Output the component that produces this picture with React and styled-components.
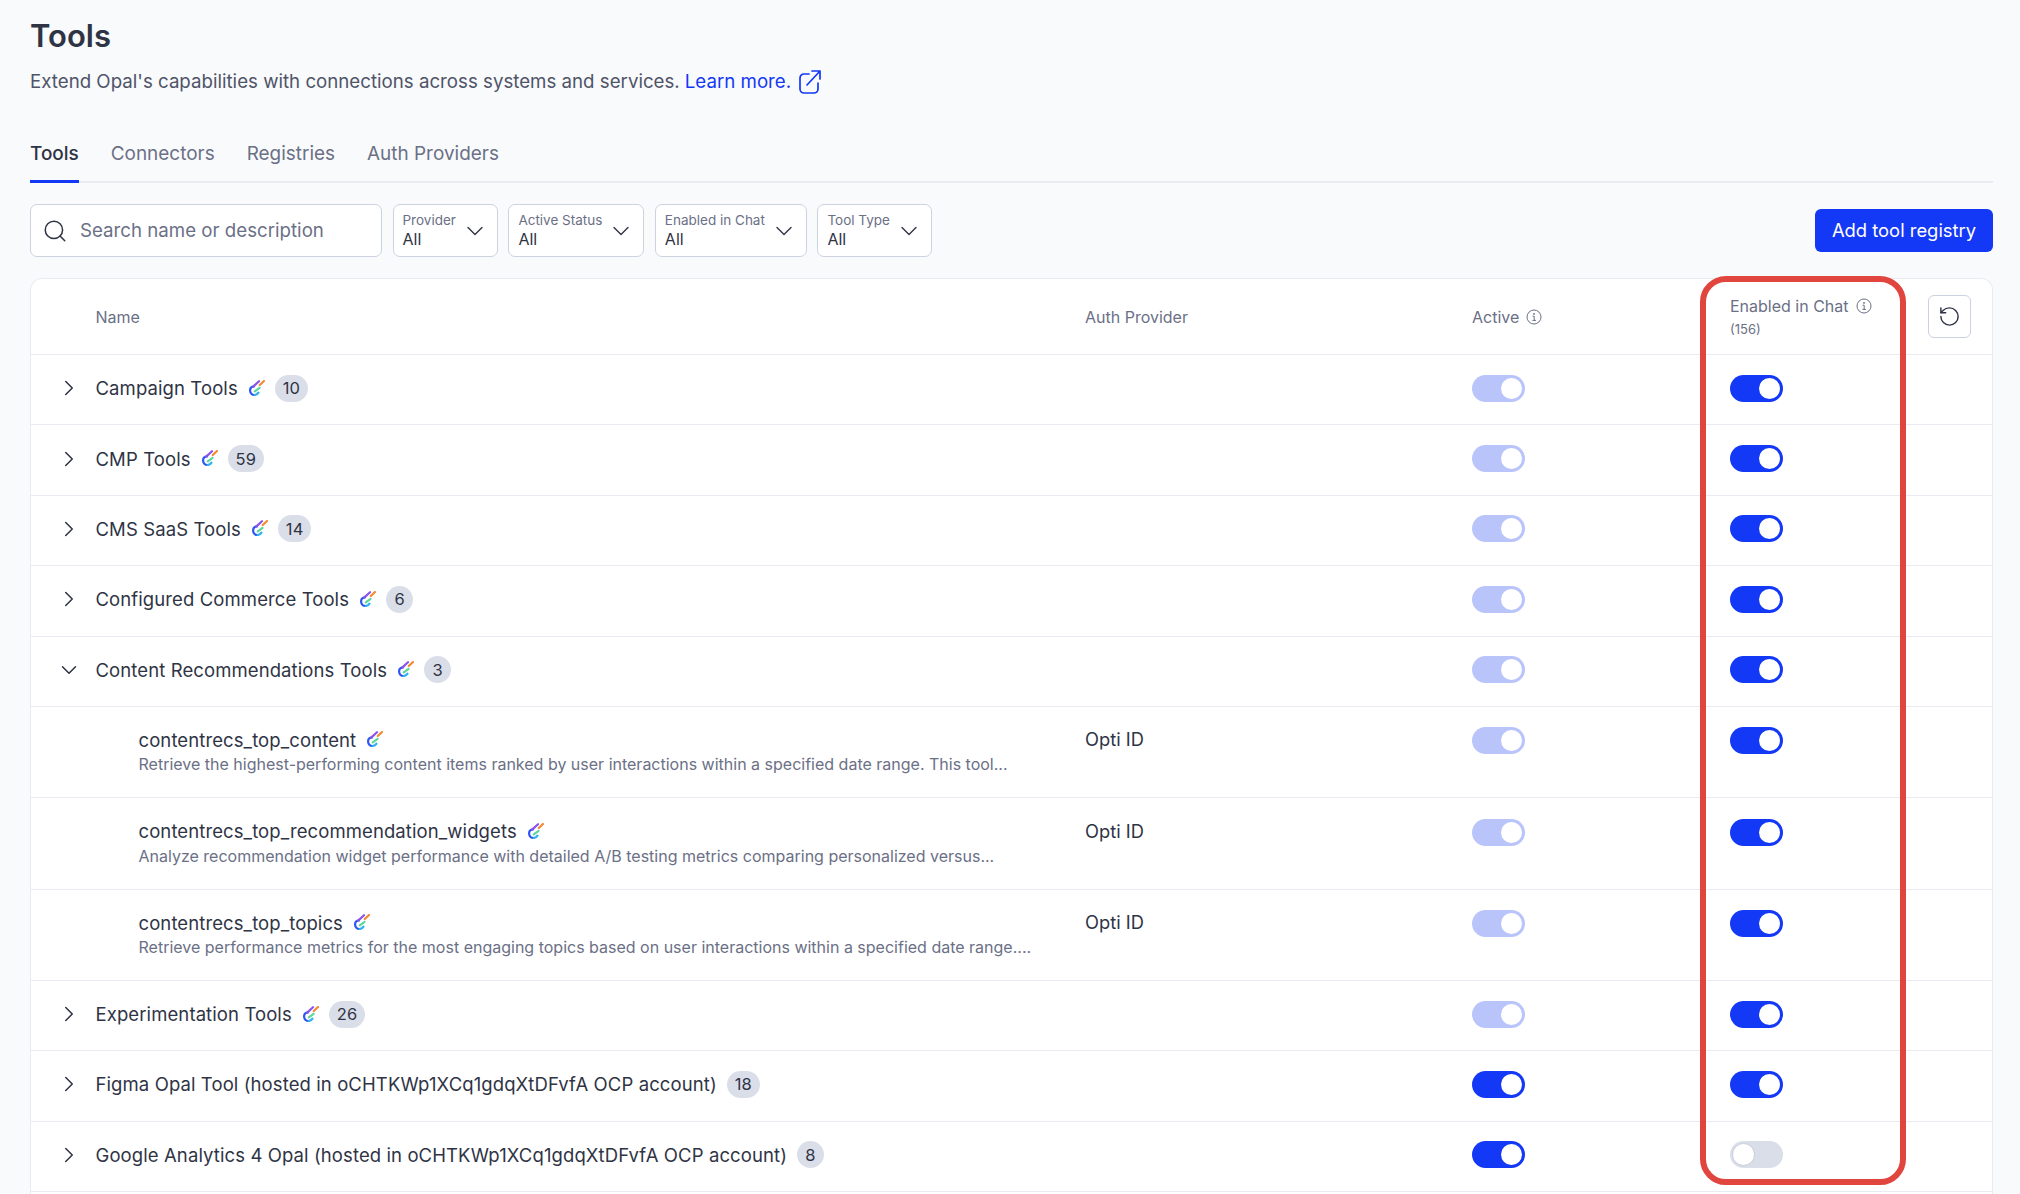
import { ChevronDown, ChevronRight, RotateCcw, Search } from "lucide-react";
import styled, { createGlobalStyle } from "styled-components";

const colors = {
  page: "#f9fafc",
  line: "#e9ebf3",
  field: "#cdd2e0",
  text: "#2f3445",
  muted: "#6b7086",
  blue: "#1338f6",
  blueSoft: "#b9c4fb",
  off: "#dadee8",
};

const GlobalStyle = createGlobalStyle`
  html, body {
    margin: 0;
    height: 100%;
    overflow: hidden;
    background: ${colors.page};
  }
  * { box-sizing: border-box; }
`;

const Page = styled.main`
  height: 1194px;
  padding: 16px 27px 0 30px;
  display: flex;
  flex-direction: column;
  overflow: hidden;
  font-family: Inter, "Noto Sans", sans-serif;
  color: ${colors.text};
`;

const Title = styled.h1`
  margin: 0;
  font-size: 31px;
  line-height: 40px;
  font-weight: 600;
`;

const Subtitle = styled.p`
  margin: 12px 0 0;
  display: flex;
  align-items: center;
  font-size: 18.7px;
  line-height: 28px;
  color: #4f5468;

  a {
    margin-left: 5px;
    color: ${colors.blue};
    text-decoration: none;
  }
  svg {
    margin-left: 8px;
    color: ${colors.blue};
  }
`;

const Tabs = styled.nav`
  margin-top: 45px;
  display: flex;
  gap: 32px;
  border-bottom: 2px solid ${colors.line};
`;

const Tab = styled.a`
  padding-bottom: 13px;
  margin-bottom: -2px;
  font-size: 18.95px;
  line-height: 26px;
  font-weight: ${(p) => (p.$active ? 500 : 400)};
  color: ${(p) => (p.$active ? colors.text : colors.muted)};
  border-bottom: 3px solid ${(p) => (p.$active ? colors.blue : "transparent")};
`;

const Toolbar = styled.div`
  margin-top: 21px;
  display: flex;
  align-items: center;
  gap: 10.5px;
`;

const SearchBox = styled.label`
  width: 352px;
  height: 53px;
  padding: 0 14px 0 11px;
  display: flex;
  align-items: center;
  gap: 12px;
  background: #fff;
  border: 1px solid ${colors.field};
  border-radius: 7px;
  color: ${colors.text};
`;

const SearchInput = styled.input`
  flex: 1;
  min-width: 0;
  border: 0;
  outline: 0;
  padding: 0;
  background: transparent;
  font-family: inherit;
  font-size: 18.7px;
  &::placeholder {
    color: ${colors.muted};
    opacity: 1;
  }
`;

const Filter = styled.button`
  height: 53px;
  padding: 0 8px 0 9px;
  display: flex;
  align-items: center;
  gap: 5px;
  background: #fff;
  border: 1px solid ${colors.field};
  border-radius: 7px;
  font-family: inherit;
  color: ${colors.text};
  text-align: left;
`;

const FilterText = styled.span`
  display: flex;
  flex-direction: column;
  margin-top: -2px;
`;

const FilterLabel = styled.span`
  font-size: 13.5px;
  line-height: 19px;
  color: ${colors.muted};
`;

const FilterValue = styled.span`
  font-size: 16px;
  line-height: 19px;
`;

const AddButton = styled.button`
  margin-left: auto;
  width: 178px;
  height: 43px;
  padding: 0 0 2px;
  border: 0;
  border-radius: 6px;
  background: ${colors.blue};
  color: #fff;
  font-family: inherit;
  font-size: 18.4px;
  font-weight: 400;
`;

const TableWrap = styled.div`
  position: relative;
  margin-top: 21px;
  flex: 1;
`;

const Card = styled.section`
  height: 100%;
  overflow: hidden;
  background: #fff;
  border: 1px solid ${colors.line};
  border-bottom: 0;
  border-radius: 12px 12px 0 0;
`;

const Row = styled.div`
  display: grid;
  grid-template-columns: 64.5px 989.5px 387px 258px 198px 1fr;
  align-items: ${(p) => (p.$child ? "start" : "center")};
  height: ${(p) => (p.$child ? "91.3px" : "70.4px")};
  padding: ${(p) => (p.$child ? "20.5px 0 0" : "0 0 3px")};
  border-bottom: 1px solid ${colors.line};
`;

const HeadRow = styled(Row)`
  height: 76px;
  padding: 0;
`;

const HeadCell = styled.div`
  font-size: 16px;
  line-height: 22px;
  color: ${colors.muted};
`;

const HeadLabel = styled.span`
  display: flex;
  align-items: center;
  gap: 7px;
`;

const HeadCount = styled.div`
  margin-top: 2px;
  font-size: 13px;
  line-height: 20px;
`;

const ResetButton = styled.button`
  width: 43px;
  height: 43px;
  display: flex;
  align-items: center;
  justify-content: center;
  padding: 0;
  background: #fff;
  border: 1px solid ${colors.field};
  border-radius: 6px;
  color: ${colors.text};
`;

const Expander = styled.span`
  display: flex;
  justify-content: center;
  padding-left: 11px;
  color: ${colors.text};
`;

const NameCell = styled.div`
  margin-top: ${(p) => (p.$child ? "-1px" : "0")};
  padding-left: ${(p) => (p.$child ? "43px" : "0")};
  min-width: 0;
`;

const NameLine = styled.div`
  display: flex;
  align-items: center;
  gap: 11px;
  height: 27px;
  font-size: 18.5px;
  letter-spacing: 0.1px;
`;

const Description = styled.div`
  font-size: 16px;
  line-height: 22px;
  color: ${colors.muted};
  white-space: nowrap;
`;

const Badge = styled.span`
  min-width: 27px;
  height: 27px;
  padding: 0 8px;
  margin-left: -1px;
  display: inline-flex;
  align-items: center;
  justify-content: center;
  border-radius: 14px;
  background: ${colors.off};
  font-size: 16.5px;
`;

const AuthCell = styled.div`
  margin-top: -1px;
  font-size: 18.3px;
  line-height: 27px;
`;

const Track = styled.span`
  width: 53px;
  height: 27px;
  padding: 3px;
  border-radius: 14px;
  display: flex;
  justify-content: ${(p) => (p.$on ? "flex-end" : "flex-start")};
  background: ${(p) => (p.$on ? (p.$soft ? colors.blueSoft : colors.blue) : colors.off)};
`;

const Knob = styled.span`
  width: 21px;
  height: 21px;
  border-radius: 50%;
  background: #fff;
  box-shadow: ${(p) => (p.$on ? "none" : "0 0 0 1px #cdd2e0")};
`;

const Highlight = styled.div`
  position: absolute;
  top: -2px;
  left: 1670px;
  width: 206px;
  height: 909px;
  border: 6px solid #e0463e;
  border-radius: 26px;
  pointer-events: none;
`;

function ExternalMark() {
  return (
    <svg width="22" height="24" viewBox="0 0 22 24" fill="none" stroke="currentColor" strokeWidth="1.7" strokeLinecap="round" strokeLinejoin="round">
      <path d="M10 4H5a4 4 0 0 0-4 4v11a4 4 0 0 0 4 4h10a4 4 0 0 0 4-4v-6" />
      <path d="M8 15 21 1M13 1h8v8" />
    </svg>
  );
}

function OpalMark() {
  return (
    <svg width="16" height="17" viewBox="0 0 16 17" fill="none" strokeLinecap="round" strokeWidth="2.2">
      <path d="M5 6.4C2.6 6.6 1 8.4 1.1 10.8c.1 2.6 2.2 4.4 4.6 4.2" stroke="#2f55f5" />
      <path d="M5.7 15c1.6-.2 3-1.1 3.8-2.4" stroke="#2fb2f2" />
      <path d="M4.4 6.4 10 1.2" stroke="#8b54ea" />
      <path d="M5.8 11.4 10.6 7.8" stroke="#5fd69a" />
      <path d="M10.8 5 15 1" stroke="#f58a32" />
    </svg>
  );
}

function InfoMark() {
  return (
    <svg width="16" height="16" viewBox="0 0 16 16" fill="none" stroke="currentColor" strokeWidth="1">
      <circle cx="8" cy="8" r="7" />
      <path d="M6.6 7.2H8.2V11.4M6.4 11.4H10" />
      <circle cx="8" cy="4.9" r="0.5" fill="currentColor" />
    </svg>
  );
}

function Toggle({ on = true, soft = false }) {
  return (
    <Track $on={on} $soft={soft}>
      <Knob $on={on} />
    </Track>
  );
}

const rows = [
  { name: "Campaign Tools", count: 10, logo: true, soft: true },
  { name: "CMP Tools", count: 59, logo: true, soft: true },
  { name: "CMS SaaS Tools", count: 14, logo: true, soft: true },
  { name: "Configured Commerce Tools", count: 6, logo: true, soft: true },
  { name: "Content Recommendations Tools", count: 3, logo: true, soft: true, open: true },
  {
    name: "contentrecs_top_content",
    child: true,
    soft: true,
    logo: true,
    desc: "Retrieve the highest-performing content items ranked by user interactions within a specified date range. This tool...",
  },
  {
    name: "contentrecs_top_recommendation_widgets",
    child: true,
    soft: true,
    logo: true,
    desc: "Analyze recommendation widget performance with detailed A/B testing metrics comparing personalized versus...",
  },
  {
    name: "contentrecs_top_topics",
    child: true,
    soft: true,
    logo: true,
    desc: "Retrieve performance metrics for the most engaging topics based on user interactions within a specified date range....",
  },
  { name: "Experimentation Tools", count: 26, logo: true, soft: true },
  { name: "Figma Opal Tool (hosted in oCHTKWp1XCq1gdqXtDFvfA OCP account)", count: 18 },
  { name: "Google Analytics 4 Opal (hosted in oCHTKWp1XCq1gdqXtDFvfA OCP account)", count: 8, chatOff: true },
];

const filters = ["Provider", "Active Status", "Enabled in Chat", "Tool Type"];

export default function App() {
  return (
    <Page>
      <GlobalStyle />
      <Title>Tools</Title>
      <Subtitle>
        Extend Opal's capabilities with connections across systems and services.
        <a href="#learn">Learn more.</a>
        <ExternalMark />
      </Subtitle>

      <Tabs>
        <Tab $active>Tools</Tab>
        <Tab>Connectors</Tab>
        <Tab>Registries</Tab>
        <Tab>Auth Providers</Tab>
      </Tabs>

      <Toolbar>
        <SearchBox>
          <Search size={26} strokeWidth={1.4} />
          <SearchInput placeholder="Search name or description" />
        </SearchBox>
        {filters.map((label) => (
          <Filter key={label}>
            <FilterText>
              <FilterLabel>{label}</FilterLabel>
              <FilterValue>All</FilterValue>
            </FilterText>
            <ChevronDown size={28} strokeWidth={1.2} />
          </Filter>
        ))}
        <AddButton>Add tool registry</AddButton>
      </Toolbar>

      <TableWrap>
        <Card>
          <HeadRow>
            <span />
            <HeadCell>Name</HeadCell>
            <HeadCell>Auth Provider</HeadCell>
            <HeadCell>
              <HeadLabel>
                Active <InfoMark />
              </HeadLabel>
            </HeadCell>
            <HeadCell>
              <HeadLabel>
                Enabled in Chat <InfoMark />
              </HeadLabel>
              <HeadCount>(156)</HeadCount>
            </HeadCell>
            <ResetButton aria-label="Reset">
              <RotateCcw size={23} strokeWidth={1.5} />
            </ResetButton>
          </HeadRow>

          {rows.map((row) => (
            <Row key={row.name} $child={row.child}>
              {row.child ? (
                <span />
              ) : (
                <Expander>
                  {row.open ? (
                    <ChevronDown size={26} strokeWidth={1.4} />
                  ) : (
                    <ChevronRight size={26} strokeWidth={1.4} />
                  )}
                </Expander>
              )}
              <NameCell $child={row.child}>
                <NameLine>
                  {row.name}
                  {row.logo && <OpalMark />}
                  {row.count && <Badge>{row.count}</Badge>}
                </NameLine>
                {row.desc && <Description>{row.desc}</Description>}
              </NameCell>
              <AuthCell>{row.child ? "Opti ID" : ""}</AuthCell>
              <Toggle soft={row.soft} />
              <Toggle on={!row.chatOff} />
            </Row>
          ))}
        </Card>
        <Highlight />
      </TableWrap>
    </Page>
  );
}
